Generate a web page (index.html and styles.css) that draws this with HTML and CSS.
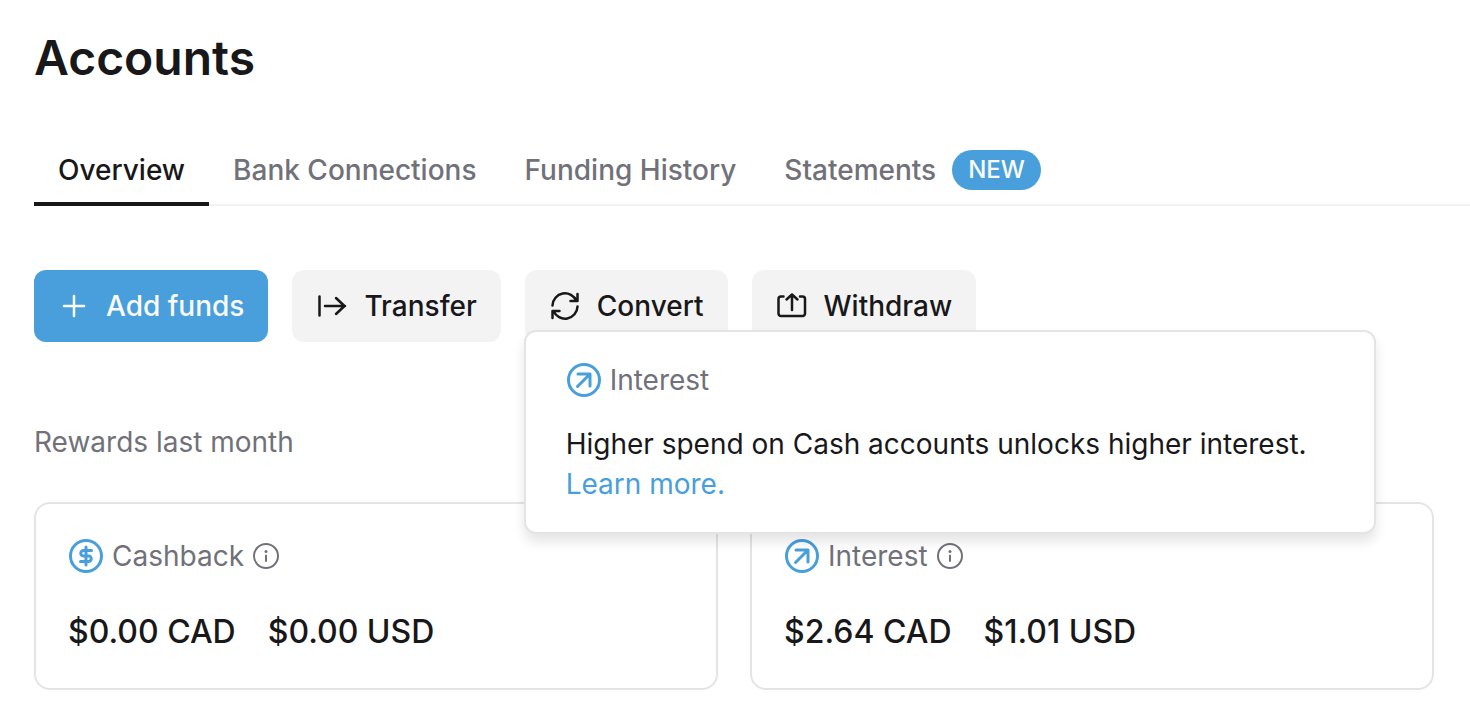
FILE: index.html
```html
<!DOCTYPE html>
<html lang="en">
<head>
    <meta charset="UTF-8">
    <meta name="viewport" content="width=device-width, initial-scale=1.0">
    <title>Accounts</title>
    <link rel="stylesheet" href="styles.css">
</head>
<body>
    <header class="page-header">
        <h1>Accounts</h1>
    </header>
    <nav class="tabs">
        <a href="#overview" class="tab active">Overview</a>
        <a href="#connections" class="tab">Bank Connections</a>
        <a href="#history" class="tab">Funding History</a>
        <a href="#statements" class="tab">Statements <span class="badge">NEW</span></a>
    </nav>
    <main>
        <div class="actions">
            <button type="button" class="btn btn-primary">
                <svg class="btn-icon" viewBox="0 0 32 32"><path d="M16 6v20M6 16h20"/></svg>
                Add funds
            </button>
            <button type="button" class="btn">
                <svg class="btn-icon" viewBox="0 0 32 32"><path d="M3.500 6.500v19M9 16h20M20 8l8.500 8-8.500 8"/></svg>
                Transfer
            </button>
            <button type="button" class="btn">
                <svg class="btn-icon" viewBox="0 0 32 32"><path d="M3.500 15.500a12.500 12.500 0 0 1 24-4.500M28.500 4v7h-7M28.500 16.500a12.500 12.500 0 0 1-24 4.500M3.500 28v-7h7"/></svg>
                Convert
            </button>
            <button type="button" class="btn">
                <svg class="btn-icon" viewBox="0 0 32 32"><path d="M7.500 6.500H5a2.500 2.500 0 0 0-2.500 2.500v14.500a2.500 2.500 0 0 0 2.500 2.500h21.500a2.500 2.500 0 0 0 2.500-2.500V9a2.500 2.500 0 0 0-2.500-2.500H24M16 20V4.500M10.500 9.500L16 4.500l5.500 5"/></svg>
                Withdraw
            </button>
        </div>
        <h2 class="section-title">Rewards last month</h2>
        <div class="cards">
            <section class="card">
                <div class="card-label">
                    <svg class="label-icon" viewBox="0 0 36 36"><circle cx="18" cy="18" r="15.500"/><path d="M18 9v18M23.500 12.500h-8a2.750 2.750 0 0 0 0 5.500h5a2.750 2.750 0 0 1 0 5.500H12.500"/></svg>
                    <span>Cashback</span>
                    <button type="button" class="info" aria-label="About cashback">
                        <svg viewBox="0 0 28 28"><circle cx="14" cy="14" r="12"/><path d="M14 13.500v5.500"/><path class="dot" d="M14 9.500v.1"/></svg>
                    </button>
                </div>
                <div class="amounts">
                    <span>$0.00 CAD</span>
                    <span>$0.00 USD</span>
                </div>
            </section>
            <section class="card">
                <div class="card-label">
                    <svg class="label-icon" viewBox="0 0 36 36"><circle cx="18" cy="18" r="15.500"/><path d="M12 12h12v12M24 12L11.500 24.500"/></svg>
                    <span>Interest</span>
                    <div class="info-wrap">
                        <button type="button" class="info" aria-label="About interest" aria-describedby="interest-tip">
                            <svg viewBox="0 0 28 28"><circle cx="14" cy="14" r="12"/><path d="M14 13.500v5.500"/><path class="dot" d="M14 9.500v.1"/></svg>
                        </button>
                        <div class="popover" id="interest-tip" role="tooltip">
                            <div class="card-label">
                                <svg class="label-icon" viewBox="0 0 36 36"><circle cx="18" cy="18" r="15.500"/><path d="M12 12h12v12M24 12L11.500 24.500"/></svg>
                                <span>Interest</span>
                            </div>
                            <p>Higher spend on Cash accounts unlocks higher interest. <a href="#learn">Learn more.</a></p>
                        </div>
                    </div>
                </div>
                <div class="amounts">
                    <span>$2.64 CAD</span>
                    <span>$1.01 USD</span>
                </div>
            </section>
        </div>
    </main>
</body>
</html>
```
FILE: styles.css
```css
* {
    box-sizing: border-box;
}
body {
    margin: 0;
    padding-left: 34px;
    background-color: #fff;
    color: #18181b;
    font-family: Inter, "Liberation Sans", sans-serif;
    font-size: 28px;
    line-height: 40px;
    overflow-x: hidden;
}
svg {
    display: block;
    fill: none;
    stroke: currentColor;
    stroke-linecap: round;
    stroke-linejoin: round;
}
.page-header {
    padding-top: 28px;
}
h1 {
    margin: 0;
    font-size: 48px;
    font-weight: 600;
    line-height: 60px;
}
.tabs {
    display: flex;
    margin-top: 48px;
    box-shadow: inset 0 -2px #f3f3f3;
}
.tab {
    display: flex;
    align-items: center;
    gap: 16px;
    padding: 14px 24px 12px;
    border-bottom: 4px solid transparent;
    color: #71717a;
    font-weight: 500;
    text-decoration: none;
}
.tab.active {
    color: #18181b;
    border-bottom-color: #18181b;
}
.badge {
    padding: 0 16px;
    border-radius: 20px;
    background-color: #489fdc;
    color: #fafafa;
    font-size: 24px;
}
main {
    padding: 64px 36px 34px 0;
}
.actions {
    display: flex;
    gap: 24px;
}
.btn {
    display: flex;
    align-items: center;
    gap: 16px;
    height: 72px;
    padding: 0 24px;
    border: none;
    border-radius: 12px;
    background-color: #f3f3f3;
    color: #18181b;
    font: inherit;
    font-weight: 500;
    cursor: pointer;
}
.btn-primary {
    background-color: #489fdc;
    color: #fafafa;
}
.btn-icon {
    width: 32px;
    height: 32px;
    stroke-width: 2.5;
}
.section-title {
    margin: 80px 0 40px;
    color: #71717a;
    font-size: 28px;
    font-weight: 400;
}
.cards {
    display: grid;
    grid-template-columns: 1fr 1fr;
    gap: 32px;
}
.card {
    padding: 32px;
    border: 2px solid #e4e4e4;
    border-radius: 16px;
}
.card-label {
    display: flex;
    align-items: center;
    gap: 8px;
    color: #71717a;
}
.label-icon {
    width: 36px;
    height: 36px;
    color: #489fdc;
    stroke-width: 3;
}
.info-wrap {
    position: relative;
}
.info {
    display: block;
    width: 28px;
    height: 28px;
    padding: 0;
    border: none;
    background: none;
    color: #71717a;
    stroke-width: 2;
    cursor: pointer;
}
.dot {
    stroke-width: 3;
}
.amounts {
    display: flex;
    gap: 32px;
    margin-top: 32px;
    font-size: 32px;
    font-weight: 500;
    line-height: 48px;
}
.popover {
    position: absolute;
    bottom: calc(100% + 8px);
    left: 50%;
    width: 852px;
    padding: 28px 40px;
    border: 2px solid #e4e4e4;
    border-radius: 12px;
    background-color: #fff;
    color: #18181b;
    box-shadow: 0 8px 12px rgba(0, 0, 0, 0.1);
    transform: translateX(-50%);
}
.popover p {
    margin: 24px 0 0;
}
.popover a {
    color: #489fdc;
    text-decoration: none;
}
```
